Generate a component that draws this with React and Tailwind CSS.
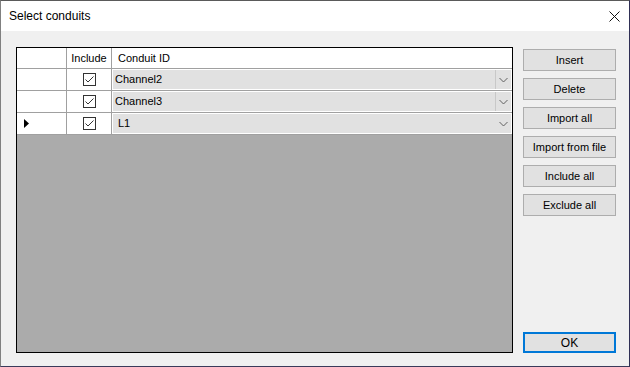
import React from 'react';

const font = { fontFamily: '"Liberation Sans", Arial, sans-serif' };

const rows = [
    { id: 'Channel2', current: false },
    { id: 'Channel3', current: false },
    { id: 'L1', current: true },
];

const buttons = ['Insert', 'Delete', 'Import all', 'Import from file', 'Include all', 'Exclude all'];

const CheckBox = () => (
    <div className="w-[13px] h-[13px] border border-[#333333] bg-white flex items-center justify-center">
        <svg width="11" height="11" viewBox="0 0 11 11">
            <polyline points="1.5,5.5 4,8 9.5,2.5" fill="none" stroke="#333333" strokeWidth="1" />
        </svg>
    </div>
);

const Chevron = () => (
    <svg width="9" height="6" viewBox="0 0 9 6">
        <polyline points="0.5,1 4.5,5 8.5,1" fill="none" stroke="#606060" strokeWidth="1" />
    </svg>
);

const App = () => {
    return (
        <div
            className="w-[630px] h-[367px] flex flex-col bg-white border-l border-l-[#808080] border-r border-r-[#2f2f55] border-b border-b-[#3a3a5a] border-t border-t-[#5a5a5a] text-[11px] text-black"
            style={font}
        >
            {/* Title bar */}
            <div className="h-[30px] flex items-center justify-between pl-[8px] pr-[9px] bg-white">
                <span className="text-[12px]">Select conduits</span>
                <svg width="11" height="11" viewBox="0 0 11 11">
                    <path d="M0.5 0.5 L10.5 10.5 M10.5 0.5 L0.5 10.5" stroke="#111111" strokeWidth="1" />
                </svg>
            </div>

            {/* Body */}
            <div className="flex-1 bg-[#f0f0f0] flex pl-[15px] pt-[16px]">
                {/* Grid */}
                <div className="w-[497px] h-[306px] border border-black bg-[#ababab] flex flex-col">
                    <div className="h-[21px] flex bg-white border-b border-[#a0a0a0]">
                        <div className="w-[50px] border-r border-[#a0a0a0]" />
                        <div className="w-[45px] border-r border-[#a0a0a0] flex items-center justify-center">Include</div>
                        <div className="flex-1 flex items-center pl-[6px]">Conduit ID</div>
                    </div>
                    {rows.map((r) => (
                        <div key={r.id} className="h-[22px] flex bg-white border-b border-[#a0a0a0]">
                            <div className="w-[50px] border-r border-[#a0a0a0] flex items-center pl-[7px]">
                                {r.current && (
                                    <svg width="5" height="9" viewBox="0 0 5 9">
                                        <polygon points="0,0 5,4.5 0,9" fill="#000000" />
                                    </svg>
                                )}
                            </div>
                            <div className="w-[45px] border-r border-[#a0a0a0] flex items-center justify-center">
                                <CheckBox />
                            </div>
                            <div className="flex-1 p-[1px]">
                                <div className="h-full bg-[#e1e1e1] flex items-center">
                                    <span className={`flex-1 ${r.current ? 'pl-[5px]' : 'pl-[2px]'}`}>{r.id}</span>
                                    <div
                                        className={`w-[16px] h-full flex items-center justify-center ${r.current ? '' : 'border-l border-[#c8c8c8]'}`}
                                    >
                                        <Chevron />
                                    </div>
                                </div>
                            </div>
                        </div>
                    ))}
                </div>

                {/* Buttons */}
                <div className="ml-[10px] w-[93px] h-[306px] flex flex-col">
                    <div className="mt-[2px] flex flex-col gap-[7px]">
                        {buttons.map((b) => (
                            <div
                                key={b}
                                className="h-[22px] bg-[#e1e1e1] border border-[#adadad] flex items-center justify-center"
                            >
                                {b}
                            </div>
                        ))}
                    </div>
                    <div className="mt-auto h-[21px] bg-[#e1e1e1] border-2 border-[#0078d7] flex items-center justify-center text-[12px]">
                        OK
                    </div>
                </div>
            </div>
        </div>
    );
};

export default App;
